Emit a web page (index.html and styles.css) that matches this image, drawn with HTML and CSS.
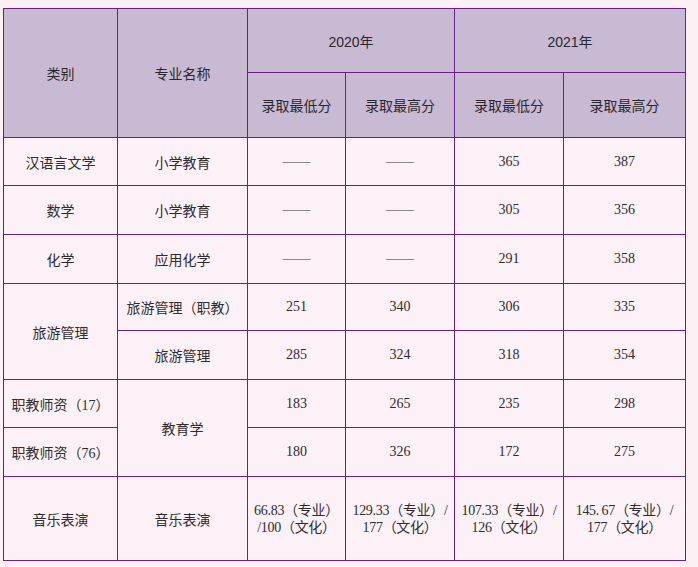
FILE: index.html
```html
<!DOCTYPE html>
<html lang="zh-CN">
<head>
<meta charset="utf-8">
<title>录取分数</title>
<link rel="stylesheet" href="styles.css">
</head>
<body>
<div class="page">
<table class="scores">
  <colgroup>
    <col class="c1"><col class="c2"><col class="c3"><col class="c4"><col class="c5"><col class="c6">
  </colgroup>
  <thead>
    <tr class="h1">
      <th rowspan="2">类别</th>
      <th rowspan="2">专业名称</th>
      <th colspan="2">2020年</th>
      <th colspan="2">2021年</th>
    </tr>
    <tr class="h2">
      <th>录取最低分</th>
      <th>录取最高分</th>
      <th>录取最低分</th>
      <th>录取最高分</th>
    </tr>
  </thead>
  <tbody>
    <tr class="r48">
      <td>汉语言文学</td><td>小学教育</td><td><span class="dash">——</span></td><td><span class="dash">——</span></td><td>365</td><td>387</td>
    </tr>
    <tr class="r49">
      <td>数学</td><td>小学教育</td><td><span class="dash">——</span></td><td><span class="dash">——</span></td><td>305</td><td>356</td>
    </tr>
    <tr class="r49">
      <td>化学</td><td>应用化学</td><td><span class="dash">——</span></td><td><span class="dash">——</span></td><td>291</td><td>358</td>
    </tr>
    <tr class="r47">
      <td rowspan="2">旅游管理</td><td>旅游管理（职教）</td><td>251</td><td>340</td><td>306</td><td>335</td>
    </tr>
    <tr class="r49">
      <td>旅游管理</td><td>285</td><td>324</td><td>318</td><td>354</td>
    </tr>
    <tr class="r48">
      <td>职教师资（17）</td><td rowspan="2">教育学</td><td>183</td><td>265</td><td>235</td><td>298</td>
    </tr>
    <tr class="r49">
      <td>职教师资（76）</td><td>180</td><td>326</td><td>172</td><td>275</td>
    </tr>
    <tr class="r84">
      <td>音乐表演</td><td>音乐表演</td>
      <td class="tight">66.83（专业）<br>/100（文化）</td>
      <td class="tight">129.33（专业）/<br>177（文化）</td>
      <td class="tight">107.33（专业）/<br>126（文化）</td>
      <td class="tight">145.&#8201;67（专业）/<br>177（文化）</td>
    </tr>
  </tbody>
</table>
</div>
</body>
</html>
```
FILE: styles.css
```css
html, body {
  margin: 0;
  padding: 0;
  background: #fcf0f5;
}

.page {
  padding: 8px 0 0 3px;
}

.scores {
  border-collapse: collapse;
  table-layout: fixed;
  width: 683px;
  border: 1px solid #6e1f86;
}

.c1 { width: 114px; }
.c2 { width: 130px; }
.c3 { width: 98px; }
.c4 { width: 109px; }
.c5 { width: 109px; }
.c6 { width: 122px; }

.scores th,
.scores td {
  border: 1px solid #6e1f86;
  text-align: center;
  vertical-align: middle;
  padding: 0;
}

.scores th {
  background: #c9bad3;
  color: #2a262c;
  font-family: "Liberation Sans", "Noto Sans CJK SC", sans-serif;
  font-weight: normal;
  font-size: 14px;
}

.scores td {
  background: #fcf1f6;
  color: #2f2c30;
  font-family: "Liberation Serif", "Noto Sans CJK SC", serif;
  font-size: 14px;
}

.h1 { height: 64px; }
.h2 { height: 65px; }
.r47 { height: 47px; }
.r48 { height: 48px; }
.r49 { height: 49px; }
.r84 { height: 84px; }

.dash {
  color: #3a3a3a;
}

.tight {
  line-height: 17px;
  white-space: nowrap;
  letter-spacing: -0.3px;
}
```
